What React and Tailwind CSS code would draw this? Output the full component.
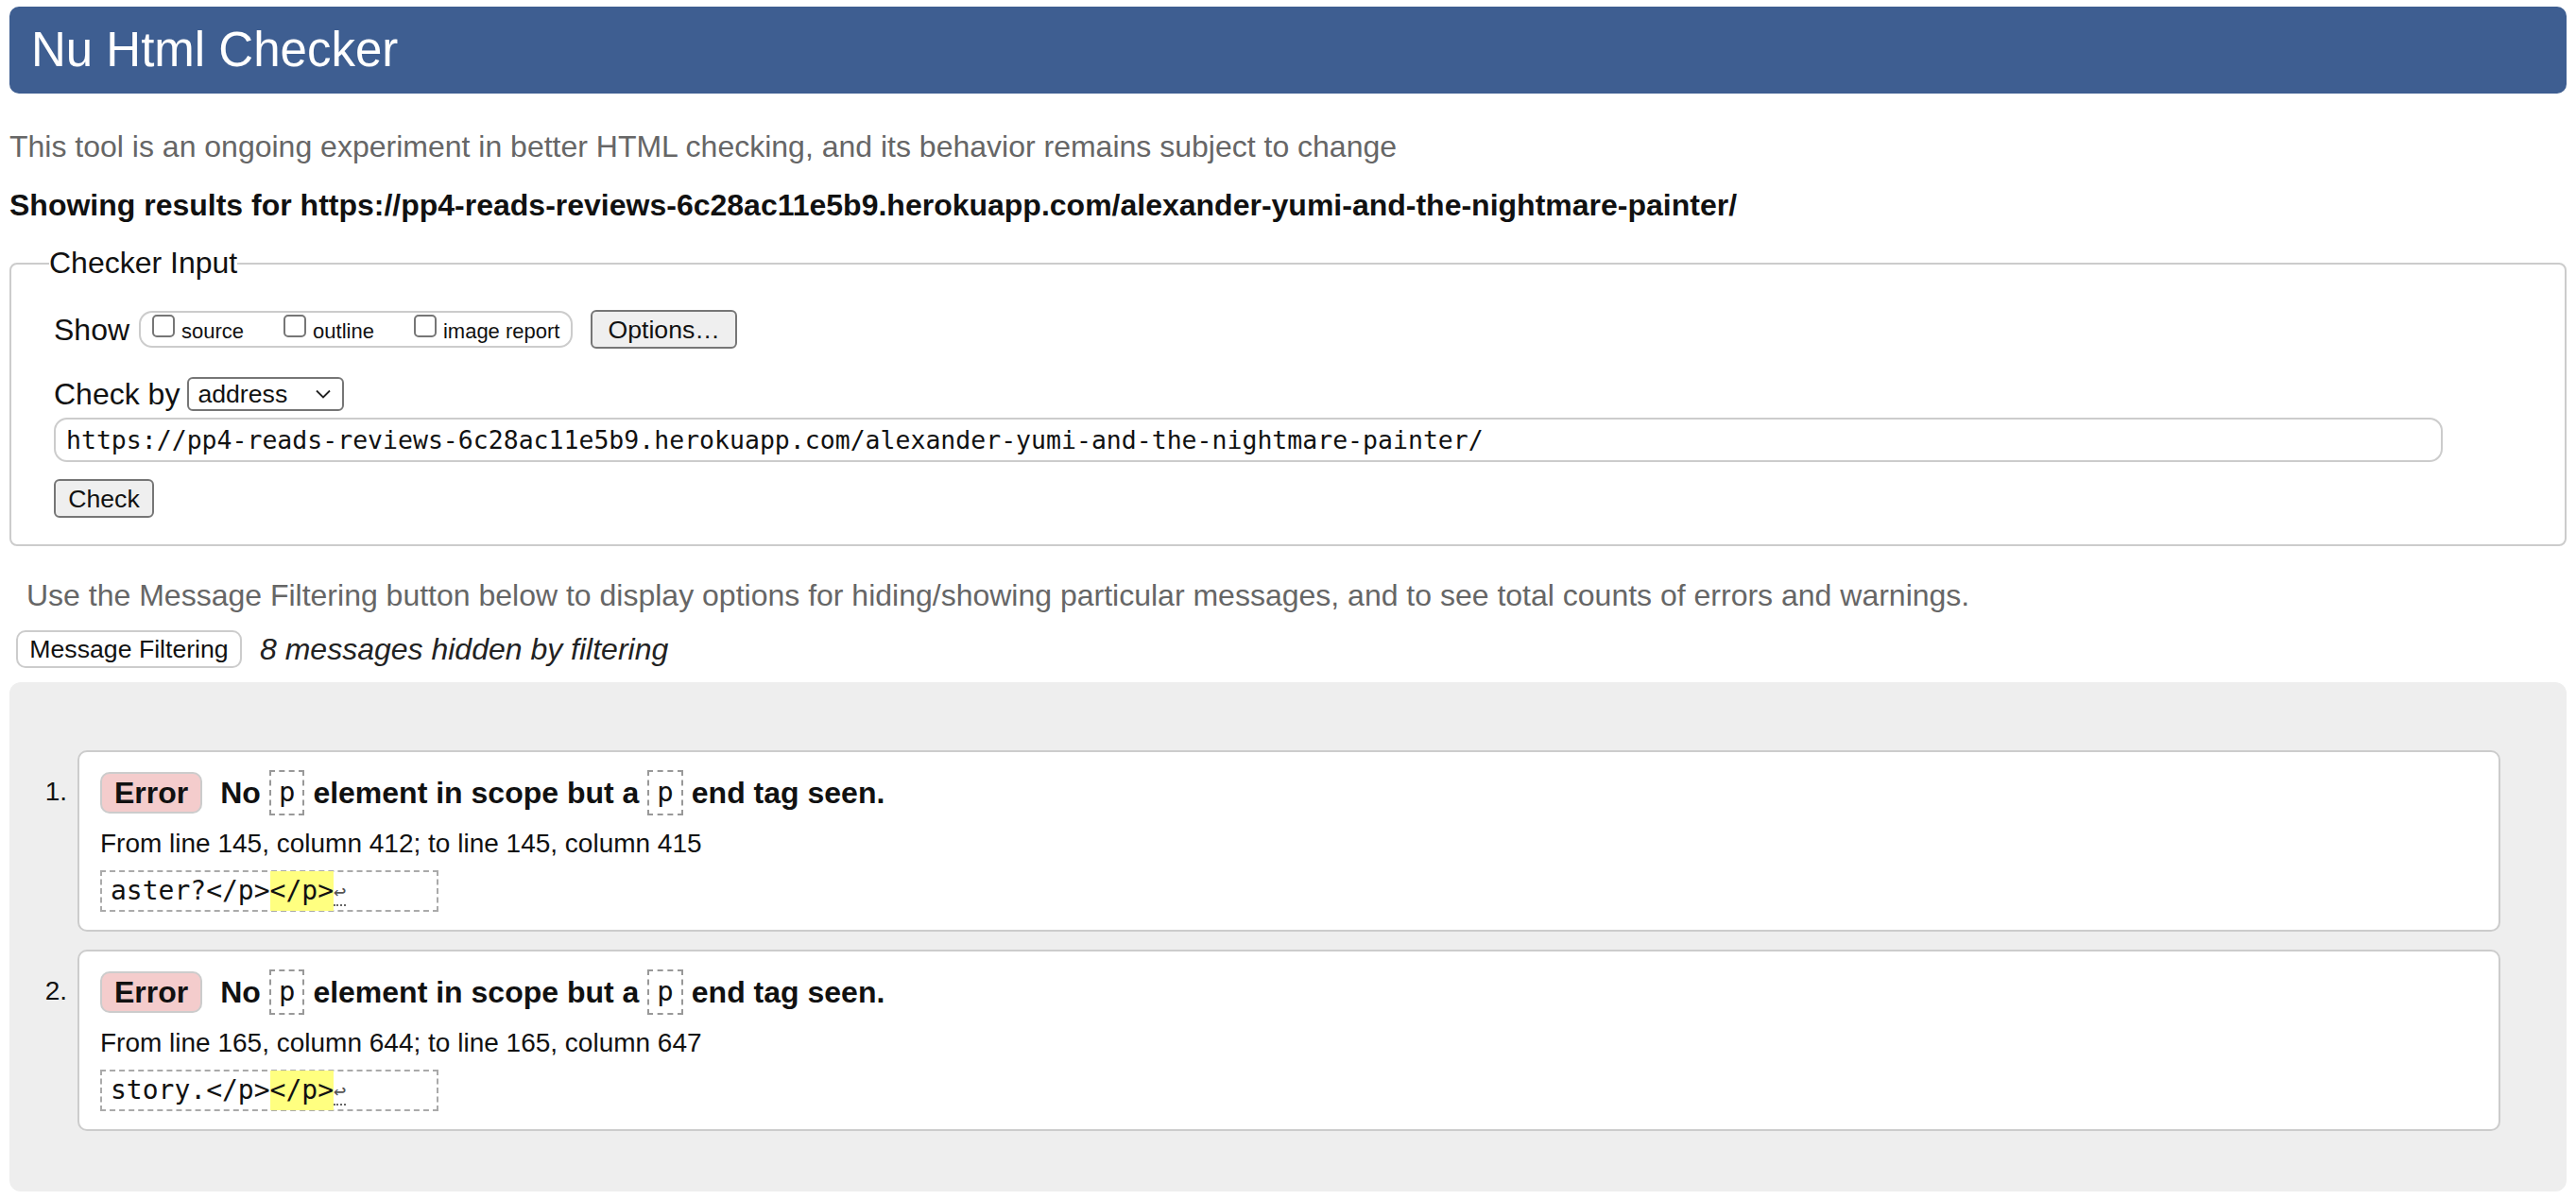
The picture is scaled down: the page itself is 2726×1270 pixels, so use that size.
const messages = [
  {
    n: "1.",
    range: "From line 145, column 412; to line 145, column 415",
    before: "aster?</p>",
  },
  {
    n: "2.",
    range: "From line 165, column 644; to line 165, column 647",
    before: "story.</p>",
  },
];

const mono = { fontFamily: '"DejaVu Sans Mono", "Liberation Mono", monospace' };

function Checkbox({ label }) {
  return (
    <label className="flex items-start gap-[7px]">
      <span className="mt-[1px] h-[24px] w-[24px] rounded-[5px] border-2 border-[#767676] bg-white"></span>
      <span className="mt-[5px] text-[22px] leading-[28px] text-[#111]">{label}</span>
    </label>
  );
}

function Message({ item }) {
  return (
    <div className="flex items-start">
      <div className="w-[72px] pr-[11px] pt-[26px] text-right text-[28px] leading-[36px] text-[#111]">{item.n}</div>
      <div className="flex-1 rounded-[10px] border-2 border-[#ccc] bg-white px-[22px] pt-[18px] pb-[19px]">
        <div className="flex h-[50px] items-center text-[32px] font-bold text-[#111]">
          <span className="flex h-[44px] items-center rounded-[10px] border-2 border-[#ccc] bg-[#f4cccc] px-[13px]">Error</span>
          <span className="ml-[19px]">No</span>
          <code className="mx-[9px] flex h-[48px] items-center border-2 border-dashed border-[#999] px-[8px] text-[29px] font-normal" style={mono}>p</code>
          <span>element in scope but a</span>
          <code className="mx-[9px] flex h-[48px] items-center border-2 border-dashed border-[#999] px-[8px] text-[29px] font-normal" style={mono}>p</code>
          <span>end tag seen.</span>
        </div>
        <p className="mt-[11px] text-[28px] leading-[36px] text-[#111]">{item.range}</p>
        <div className="mt-[10px] flex h-[44px] w-[358px] items-center border-2 border-dashed border-[#aaa] pl-[9px] text-[28px] text-[#111]" style={mono}>
          <span>{item.before}</span>
          <span className="bg-[#ffff80]">{"</p>"}</span>
          <span className="mt-[4px] border-b-2 border-dotted border-[#666] text-[22px] leading-[26px] text-[#555]">↩</span>
        </div>
      </div>
    </div>
  );
}

export default function App() {
  return (
    <div className="min-h-screen bg-white pb-[13px] text-[#111]" style={{ fontFamily: '"Liberation Sans", Arial, Helvetica, sans-serif' }}>
      <div className="mx-[10px] mt-[7px] flex h-[92px] items-center rounded-[10px] bg-[#3e5e91] px-[23px] text-[51px] text-white">
        Nu Html Checker
      </div>

      <p className="mx-[10px] mt-[36px] text-[32px] leading-[40px] text-[#666]">
        This tool is an ongoing experiment in better HTML checking, and its behavior remains subject to change
      </p>
      <p className="mx-[10px] mt-[22px] text-[32px] font-bold leading-[40px] text-[#111]">
        Showing results for https://pp4-reads-reviews-6c28ac11e5b9.herokuapp.com/alexander-yumi-and-the-nightmare-painter/
      </p>

      <fieldset className="mx-[10px] mt-[23px] rounded-[8px] border-2 border-[#ccc] px-[40px] pb-[28px]">
        <legend className="text-[32px] leading-[37px] text-[#111]">Checker Input</legend>
        <div className="pl-[5px] pt-[31px]">
          <div className="flex h-[41px] items-center">
            <span className="text-[32px]">Show</span>
            <div className="ml-[10px] flex h-[39px] items-start gap-[42px] rounded-[14px] border-2 border-[#ccc] pl-[12px] pr-[12px] pt-[1px]">
              <Checkbox label="source" />
              <Checkbox label="outline" />
              <Checkbox label="image report" />
            </div>
            <button className="ml-[19px] flex h-[41px] items-center rounded-[6px] border-2 border-[#767676] bg-[#efefef] px-[16px] text-[26.67px] text-[#111]">
              Options…
            </button>
          </div>

          <div className="mt-[30px] flex h-[36px] items-center">
            <span className="text-[32px]">Check by</span>
            <div className="ml-[8px] flex h-[36px] w-[166px] items-center justify-between rounded-[6px] border-2 border-[#767676] bg-white pl-[9px] pr-[12px] text-[26.67px]">
              <span>address</span>
              <svg width="16" height="10" viewBox="0 0 16 10" fill="none" stroke="#222" strokeWidth="1.8">
                <path d="M1 1.5 L8 8.5 L15 1.5" />
              </svg>
            </div>
          </div>

          <div className="mt-[7px] flex h-[47px] items-center rounded-[14px] border-2 border-[#ccc] pl-[11px] text-[26.5px] text-[#111]" style={{ ...mono, width: 2528 }}>
            https://pp4-reads-reviews-6c28ac11e5b9.herokuapp.com/alexander-yumi-and-the-nightmare-painter/
          </div>

          <button className="mt-[18px] flex h-[41px] w-[106px] items-center justify-center rounded-[6px] border-2 border-[#767676] bg-[#efefef] text-[26.67px] text-[#111]">
            Check
          </button>
        </div>
      </fieldset>

      <p className="ml-[28px] mt-[32px] text-[32px] leading-[40px] text-[#666]">
        Use the Message Filtering button below to display options for hiding/showing particular messages, and to see total counts of errors and warnings.
      </p>

      <div className="ml-[17px] mt-[17px] flex items-center">
        <button className="flex h-[40px] w-[239px] items-center justify-center rounded-[10px] border-2 border-[#ccc] bg-white text-[26.67px] text-[#111]">
          Message Filtering
        </button>
        <span className="ml-[19px] text-[32px] italic leading-[40px] text-[#222]">8 messages hidden by filtering</span>
      </div>

      <div className="mx-[10px] mt-[15px] flex flex-col gap-[19px] rounded-[12px] bg-[#eee] pr-[70px] pt-[72px] pb-[64px]">
        {messages.map((m) => (
          <Message key={m.n} item={m} />
        ))}
      </div>
    </div>
  );
}
